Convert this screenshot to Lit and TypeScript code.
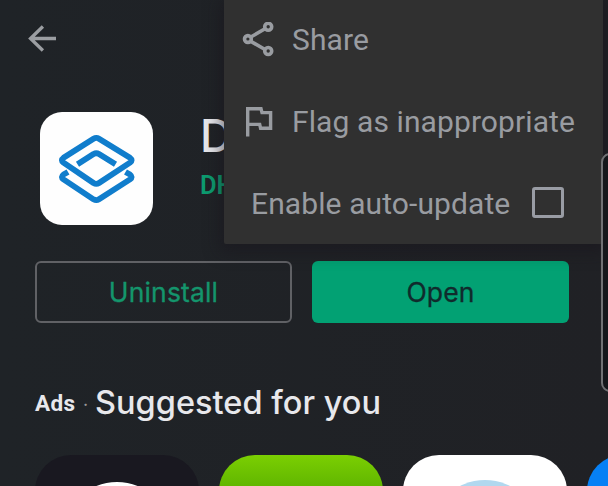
import { LitElement, html, css, svg } from "lit";
import { customElement } from "lit/decorators.js";

const backIcon = svg`<path d="M56 38.5H30.5M42.9 26.5L30.5 38.5L42.9 50.5" transform="translate(-26 -22)" fill="none" stroke="#9b9ea2" stroke-width="3.3"/>`;

@customElement("overflow-menu")
class OverflowMenu extends LitElement {
  static styles = css`
    :host {
      display: block;
      box-sizing: border-box;
      background: #303030;
      border-radius: 0 0 2px 2px;
      box-shadow: 0 4px 16px 4px rgba(24, 20, 28, 0.5);
      color: #999ca1;
      font: 400 30px/82px Roboto, sans-serif;
      white-space: nowrap;
    }
    .row { display: flex; align-items: center; height: 82px; }
    .row:first-child { height: 81px; line-height: 79px; }
    .icon { flex: none; width: 36px; height: 36px; margin: 0 15px 0 17px; }
    .row:first-child .icon { margin-top: -1px; }
    .share { letter-spacing: 0.1px; margin-top: -2px; }
    .flag { letter-spacing: 0.1px; }
    .auto { padding-left: 27px; letter-spacing: 0.1px; }
    .box {
      box-sizing: border-box;
      width: 32px;
      height: 31px;
      margin: -3px 0 0 22px;
      border: 3px solid #999ca4;
      border-radius: 3px;
    }
  `;
  render() {
    return html`
      <div class="row">
        <svg class="icon" viewBox="0 0 36 36" fill="none" stroke="#999ca1" stroke-width="3.6">
          <path d="M9 15.5L24 6.8M9 18.9L24 27.5" />
          <circle cx="6.9" cy="17" r="3.4" /><circle cx="27.2" cy="4.8" r="3.5" /><circle cx="27.2" cy="29" r="3.5" />
        </svg>
        <span class="share">Share</span>
      </div>
      <div class="row">
        <svg class="icon" viewBox="0 0 36 36" fill="none" stroke="#999ca1" stroke-width="3.4">
          <path d="M6.7 32.5V4.8H20L21 8.6H29.6V24.3H19.6L18.7 20.4H6.7" />
        </svg>
        <span class="flag">Flag as inappropriate</span>
      </div>
      <div class="row auto"><span>Enable auto-update</span><span class="box"></span></div>
    `;
  }
}

@customElement("app-root")
class AppRoot extends LitElement {
  static styles = css`
    :host {
      display: block;
      position: relative;
      box-sizing: border-box;
      width: 608px;
      height: 486px;
      overflow: hidden;
      background: linear-gradient(90deg, #1f2327, #202125);
      font-family: Inter, sans-serif;
      color: #e8e8ec;
    }
    .bar { height: 112px; padding: 22px 0 0 26px; box-sizing: border-box; }
    .bar svg { display: block; }
    .app { display: flex; height: 113px; padding-left: 40px; }
    .logo { width: 113px; height: 113px; border-radius: 22px; background: #fefefe; }
    .names { margin-left: 47px; white-space: nowrap; }
    .title { font: 500 45px/48px Inter, sans-serif; }
    .dev { font: 600 25.5px/30px Roboto, sans-serif; color: #0d9c70; margin-top: 10px; }
    .actions { display: flex; gap: 20px; padding: 36px 39px 0 35px; }
    .btn {
      flex: none;
      width: 257px;
      box-sizing: border-box;
      height: 62px;
      border-radius: 6px;
      text-align: center;
      font-size: 26.5px;
      line-height: 60px;
      letter-spacing: 0.15px;
      -webkit-text-stroke: 0.3px currentColor;
    }
    .outline { border: 2px solid #606165; color: #14956c; line-height: 58px; }
    .fill { background: #02a173; color: #102b2c; line-height: 62px; }
    .heading { display: flex; align-items: baseline; height: 50px; margin-top: 55px; padding-left: 35px; white-space: nowrap; }
    .ads { position: relative; top: -3px; font: 700 22.5px/50px Roboto, sans-serif; letter-spacing: 0.3px; width: 48px; }
    .dot { position: relative; top: -3px; width: 12px; font-size: 18px; color: #999; }
    .sug { font-size: 32.5px; line-height: 50px; font-weight: 500; letter-spacing: 0.03px; }
    .cards { display: flex; gap: 20px; margin-top: 27px; padding-left: 35px; }
    .card { flex: none; display: flex; justify-content: center; width: 164px; height: 164px; border-radius: 36px; overflow: hidden; }
    .card i { width: 110px; height: 110px; border-radius: 50%; flex: none; }
    .dark { background: #191820; }
    .dark i { background: #fff; margin-top: 27px; }
    .green { background: linear-gradient(#7bcf02, #5fb400 34px); }
    .white { background: #fff; }
    .white i { background: #b1d8ef; margin-top: 25px; }
    .blue { background: #0680f5; }
    overflow-menu { position: absolute; left: 224px; top: 0; width: 379px; height: 244px; }
    .edge {
      position: absolute;
      left: 601px;
      top: 153px;
      width: 30px;
      height: 239px;
      box-sizing: border-box;
      border: 2px solid #707174;
      border-radius: 9px;
      background: #15171b;
    }
  `;
  render() {
    return html`
      <div class="bar"><svg width="34" height="34" viewBox="0 0 34 34">${backIcon}</svg></div>
      <div class="app">
        <div class="logo">
          <svg width="113" height="113" viewBox="0 0 113 113" fill="none" stroke="#107dcc" stroke-width="5.8" stroke-linejoin="round">
            <path d="M53.5 26.7Q56.3 25 59 26.7L90 45.8Q93.3 48.2 90 50.6L59 71Q56.3 72.7 53.5 71L23.5 50.6Q20.2 48.2 23.5 45.8Z" />
            <path d="M37.5 52.3L53.5 42Q56.3 40.5 59 42L75.5 52.3" />
            <path d="M28 60L23.5 62.6Q20.2 65 23.5 67.4L53.5 87.3Q56.3 89 59 87.3L90 67.4Q93.3 65 90 62.6L85.5 60" />
          </svg>
        </div>
        <div class="names"><div class="title">D</div><div class="dev">DH</div></div>
      </div>
      <div class="actions"><div class="btn outline">Uninstall</div><div class="btn fill">Open</div></div>
      <div class="heading"><span class="ads">Ads</span><span class="dot">·</span><span class="sug">Suggested for you</span></div>
      <div class="cards">
        <div class="card dark"><i></i></div>
        <div class="card green"></div>
        <div class="card white"><i></i></div>
        <div class="card blue"></div>
      </div>
      <overflow-menu></overflow-menu>
      <div class="edge"></div>
    `;
  }
}
